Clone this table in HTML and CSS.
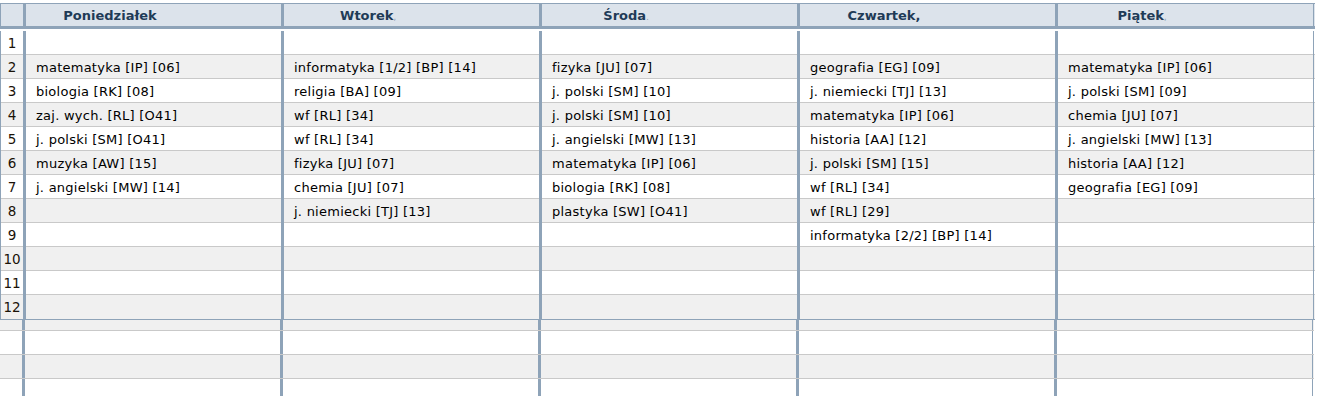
FILE: index.html
```html
<!DOCTYPE html>
<html lang="pl">
<head>
<meta charset="utf-8">
<title>Plan lekcji</title>
<link rel="stylesheet" href="styles.css">
</head>
<body>
<div class="plan">
  <div class="row head">
    <div class="num"></div>
    <div class="day"><span class="lbl">Poniedziałek</span></div>
    <div class="day"><span class="lbl">Wtorek<span class="tick">,</span></span></div>
    <div class="day"><span class="lbl">Środa<span class="tick">.</span></span></div>
    <div class="day"><span class="lbl">Czwartek,</span></div>
    <div class="day last"><span class="lbl">Piątek<span class="tick">,</span></span></div>
  </div>
  <div class="row first"><div class="num">1</div><div class="day"></div><div class="day"></div><div class="day"></div><div class="day"></div><div class="day last"></div></div>
  <div class="row alt"><div class="num">2</div><div class="day">matematyka [IP] [06]</div><div class="day">informatyka [1/2] [BP] [14]</div><div class="day">fizyka [JU] [07]</div><div class="day">geografia [EG] [09]</div><div class="day last">matematyka [IP] [06]</div></div>
  <div class="row"><div class="num">3</div><div class="day">biologia [RK] [08]</div><div class="day">religia [BA] [09]</div><div class="day">j. polski [SM] [10]</div><div class="day">j. niemiecki [TJ] [13]</div><div class="day last">j. polski [SM] [09]</div></div>
  <div class="row alt"><div class="num">4</div><div class="day">zaj. wych. [RL] [O41]</div><div class="day">wf [RL] [34]</div><div class="day">j. polski [SM] [10]</div><div class="day">matematyka [IP] [06]</div><div class="day last">chemia [JU] [07]</div></div>
  <div class="row"><div class="num">5</div><div class="day">j. polski [SM] [O41]</div><div class="day">wf [RL] [34]</div><div class="day">j. angielski [MW] [13]</div><div class="day">historia [AA] [12]</div><div class="day last">j. angielski [MW] [13]</div></div>
  <div class="row alt"><div class="num">6</div><div class="day">muzyka [AW] [15]</div><div class="day">fizyka [JU] [07]</div><div class="day">matematyka [IP] [06]</div><div class="day">j. polski [SM] [15]</div><div class="day last">historia [AA] [12]</div></div>
  <div class="row"><div class="num">7</div><div class="day">j. angielski [MW] [14]</div><div class="day">chemia [JU] [07]</div><div class="day">biologia [RK] [08]</div><div class="day">wf [RL] [34]</div><div class="day last">geografia [EG] [09]</div></div>
  <div class="row alt"><div class="num">8</div><div class="day"></div><div class="day">j. niemiecki [TJ] [13]</div><div class="day">plastyka [SW] [O41]</div><div class="day">wf [RL] [29]</div><div class="day last"></div></div>
  <div class="row"><div class="num">9</div><div class="day"></div><div class="day"></div><div class="day"></div><div class="day">informatyka [2/2] [BP] [14]</div><div class="day last"></div></div>
  <div class="row alt"><div class="num">10</div><div class="day"></div><div class="day"></div><div class="day"></div><div class="day"></div><div class="day last"></div></div>
  <div class="row"><div class="num">11</div><div class="day"></div><div class="day"></div><div class="day"></div><div class="day"></div><div class="day last"></div></div>
  <div class="row alt lastrow"><div class="num">12</div><div class="day"></div><div class="day"></div><div class="day"></div><div class="day"></div><div class="day last"></div></div>
</div>
<div class="ghost">
  <div class="row alt stub"><div class="num"></div><div class="day"></div><div class="day"></div><div class="day"></div><div class="day"></div><div class="day last"></div></div>
  <div class="row"><div class="num"></div><div class="day"></div><div class="day"></div><div class="day"></div><div class="day"></div><div class="day last"></div></div>
  <div class="row alt"><div class="num"></div><div class="day"></div><div class="day"></div><div class="day"></div><div class="day"></div><div class="day last"></div></div>
  <div class="row"><div class="num"></div><div class="day"></div><div class="day"></div><div class="day"></div><div class="day"></div><div class="day last"></div></div>
</div>
</body>
</html>
```

FILE: styles.css
```css
html, body {
  margin: 0;
  padding: 0;
  background: #ffffff;
}

body {
  font-family: "DejaVu Sans", Verdana, sans-serif;
  font-size: 13px;
  color: #000000;
  overflow: hidden;
}

.plan {
  width: 1315px;
  padding-top: 3px;
}

.row {
  display: grid;
  grid-template-columns: 23px repeat(5, 258px) 1px;
  height: 24px;
  box-sizing: border-box;
  border-bottom: 1px solid #c9c9c9;
  background: #ffffff;
}

.row.alt {
  background: #f0f0f0;
}

.row::after {
  content: "";
  background: #8ea3b8;
}

.num {
  border-left: 1px solid #8ea3b8;
  text-align: center;
  line-height: 23px;
  padding-top: 1px;
  font-family: "DejaVu Sans", Tahoma, sans-serif;
  font-size: 13.5px;
  color: #1a1208;
}

.day {
  border-left: 3px solid #8ea3b8;
  padding-left: 10px;
  padding-top: 1px;
  line-height: 23px;
  letter-spacing: 0.25px;
  white-space: nowrap;
  overflow: hidden;
}

.row.head {
  height: 26px;
  background: #dce3eb;
  border-top: 1px solid #8ea3b8;
  border-bottom: 3px solid #8ea3b8;
  margin-bottom: 2px;
}

.row.head .day {
  padding-left: 0;
  padding-top: 1px;
  line-height: 22px;
  letter-spacing: 0;
}

.row.head .lbl {
  display: inline-block;
  width: 168px;
  text-align: center;
  font-weight: bold;
  color: #1f3b57;
}

.tick {
  font-size: 8px;
  font-weight: normal;
  color: #8a9bb0;
}

.row.lastrow {
  border-bottom: 1px solid #8ea3b8;
  height: 25px;
}

.ghost {
  width: 1314px;
}

.ghost .row {
  grid-template-columns: 22px repeat(5, 258px) 1px;
}

.ghost .num {
  border-left: none;
}

.ghost .row.stub {
  height: 11px;
}
```
